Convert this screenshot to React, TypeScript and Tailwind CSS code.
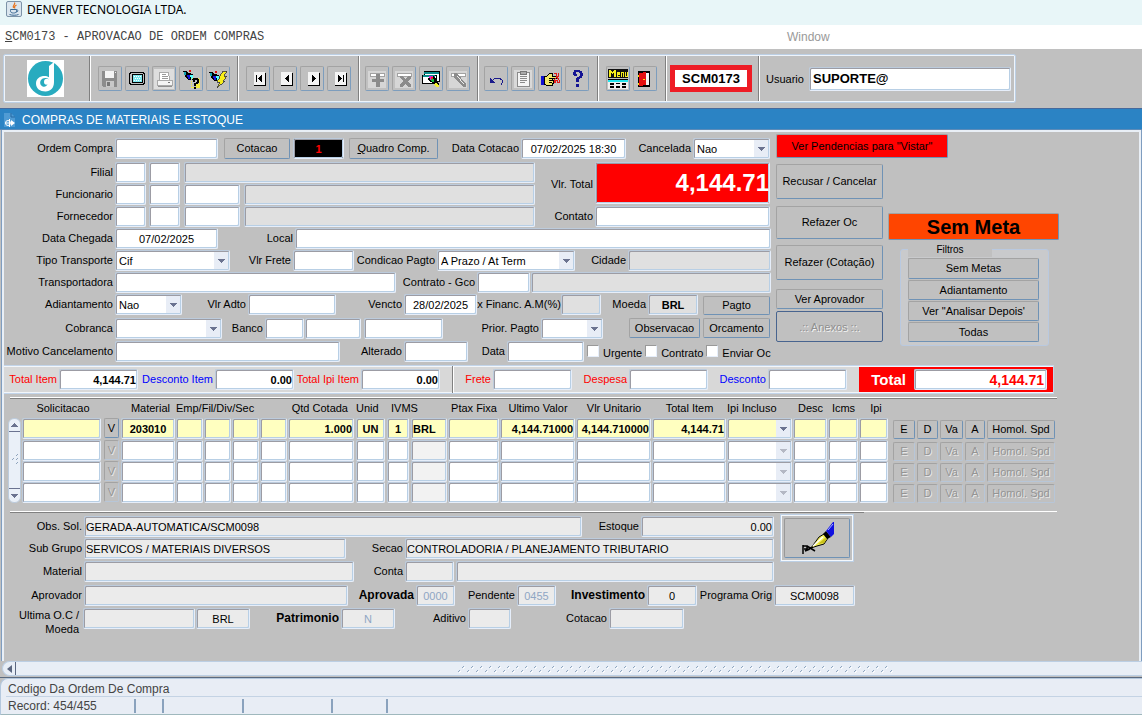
import React from "react";
import { clsx } from "clsx";

const boxEdge =
  "block rounded-[2px] border border-t-[#bccbdc] border-l-[#bccbdc] border-r-[#e6eefa] border-b-[#e6eefa] shadow-[inset_1px_1px_0_#9c9ca4,inset_-1px_-1px_0_#b8cfe5] outline-none";

const buttonEdge =
  "shrink-0 rounded-[2px] border border-t-[#a3a3a3] border-l-[#a3a3a3] border-r-[#6f92b5] border-b-[#6f92b5] whitespace-nowrap text-center leading-none";

type LabelProps = { htmlFor: string; className: string; children: React.ReactNode };

function Label({ htmlFor, className, children }: LabelProps) {
  return (
    <label htmlFor={htmlFor} className={clsx("block h-[21px] shrink-0 whitespace-nowrap pr-[2px] text-right leading-[21px]", className)}>
      {children}
    </label>
  );
}

type BoxProps = { id: string; className?: string; value?: string; name?: string };

function Box({ id, className, value, name }: BoxProps) {
  return (
    <input
      id={id}
      aria-label={name}
      defaultValue={value}
      className={clsx(boxEdge, "h-[21px] shrink-0 px-px", className)}
    />
  );
}

type DropProps = { id: string; className: string; options: string[]; name?: string; tone?: string; muted?: boolean };

function Drop({ id, className, options, name, tone = "bg-white", muted }: DropProps) {
  return (
    <div className={clsx("relative h-[21px] shrink-0", className)}>
      <select id={id} aria-label={name} disabled={muted} className={clsx(boxEdge, "h-full w-full appearance-none pl-[3px] pr-4 text-black opacity-100", tone)}>
        {options.map((o) => (
          <option key={o}>{o}</option>
        ))}
      </select>
      <span className="pointer-events-none absolute inset-y-[2px] right-[2px] flex w-[14px] items-center justify-center bg-[#e8edf6]">
        <svg width="7" height="4" viewBox="0 0 7 4" shapeRendering="crispEdges">
          <path d="M0 0h7v1h-1v1h-1v1h-1v1h-1v-1h-1v-1h-1v-1h-1z" fill={muted ? "#b4b8c4" : "#6b7390"} />
        </svg>
      </span>
    </div>
  );
}

function Push({ className, children, disabled }: { className?: string; children: React.ReactNode; disabled?: boolean }) {
  return (
    <button type="button" disabled={disabled} className={clsx(buttonEdge, className)}>
      {children}
    </button>
  );
}

function Row({ className, children }: { className?: string; children: React.ReactNode }) {
  return <div className={clsx("flex h-[22px] items-start", className)}>{children}</div>;
}

/* ---------- toolbar drawings ---------- */

const Ico = ({ children }: { children: React.ReactNode }) => (
  <svg width="20" height="20" viewBox="0 0 20 20" shapeRendering="crispEdges">
    {children}
  </svg>
);

const icons: Record<string, React.ReactNode> = {
  Salvar: (
    <Ico>
      <path d="M2 2h15v16H3l-1-1z" fill="#8c8c8c" />
      <path d="M5 2h9v7H5z" fill="#f4f4f4" />
      <path d="M6 12h8v6H6z" fill="#c8c8c8" />
      <path d="M7 13h3v4H7z" fill="#777" />
      <path d="M15 3h1v1h-1z" fill="#eee" />
    </Ico>
  ),
  Tela: (
    <Ico>
      <path d="M3 3h14v1h1v11h-1v1H3v-1H2V4h1z" fill="#000" />
      <path d="M4 4h12v1h1v9h-1v1H4v-1H3V5h1z" fill="#c0c0c0" />
      <path d="M5 5h11v9H5z" fill="#000" />
      <path d="M6 6h9v7H6z" fill="#7ee8ee" />
      <path d="M7 7h1v1H7zM9 7h1v1H9zM11 7h1v1h-1zM13 7h1v1h-1zM8 9h1v1H8zM10 9h1v1h-1zM12 9h1v1h-1zM7 11h1v1H7zM9 11h1v1H9zM11 11h1v1h-1zM13 11h1v1h-1z" fill="#fff" />
    </Ico>
  ),
  Imprimir: (
    <Ico>
      <path d="M0 0h20v20H0z" fill="#dedede" />
      <path d="M6 3h8l2 8H5z" fill="#fff" stroke="#aaa" />
      <path d="M8 5h4v1H8zM8 7h6v1H8zM8 9h6v1H8z" fill="#999" />
      <path d="M3 11h15v5H3z" fill="#f4f4f4" stroke="#aaa" />
      <path d="M4 17h14v1H4z" fill="#909090" />
      <path d="M14 13h2v1h-2z" fill="#777" />
    </Ico>
  ),
  "Entrar consulta": (
    <Ico>
      <path d="M11 9h1v1h-1zM13 9h1v1h-1zM15 9h1v1h-1zM17 9h1v1h-1zM10 12h1v1h-1zM10 14h1v1h-1zM10 16h1v1h-1zM10 18h9v1h-9zM18 10h1v8h-1zM15 15h3v3h-3z" fill="#f4ec3c" />
      <path d="M2 2h3l3 2 4 1v3l-3 3H7L4 7z" fill="#000" />
      <path d="M3 3h2v3H3z" fill="#16a7b4" />
      <path d="M6 6h3v4H7z" fill="#1515d6" />
      <path d="M9 6h3v2l-2 2z" fill="#5ff" />
      <path d="M8 1h2v2H8z" fill="#e01010" />
      <path d="M12 9h5v1h1v4h-1v1h-2v2h-2v-3h2v-1h1v-2h-2v2h-2v-2h-1v-1h1zM13 18h2v2h-2z" fill="#000" />
    </Ico>
  ),
  "Executar consulta": (
    <Ico>
      <path d="M1 3h3l3 2 4 1v3l-3 3H6L3 8z" fill="#000" />
      <path d="M2 4h2v3H2z" fill="#16a7b4" />
      <path d="M5 7h3v4H6z" fill="#1515d6" />
      <path d="M8 7h3v2l-2 2z" fill="#5ff" />
      <path d="M7 2h2v2H7z" fill="#e01010" />
      <path d="M15 2h4l-3 5h3l-4 5h2l-8 7 3-6H9l3-5h-1z" fill="#f7ee1a" stroke="#333" strokeWidth="0.8" />
    </Ico>
  ),
  Primeiro: (
    <Ico>
      <path d="M6 4h12v13H6z" fill="#000" />
      <path d="M6 3h11v13H6z" fill="#f4f4f4" />
      <path d="M8 6h1v7H8zM13 6h1v7h-1v-1h-1v-1h-1v-1h-1V9h1V8h1V7h1z" fill="#000" />
      <path d="M12 7h1v5h-1z" fill="#000" />
    </Ico>
  ),
  Anterior: (
    <Ico>
      <path d="M6 4h12v13H6z" fill="#000" />
      <path d="M6 3h11v13H6z" fill="#f4f4f4" />
      <path d="M13 6h1v7h-1v-1h-1v-1h-1v-1h-1V9h1V8h1V7h1z" fill="#000" />
    </Ico>
  ),
  Proximo: (
    <Ico>
      <path d="M6 4h12v13H6z" fill="#000" />
      <path d="M6 3h11v13H6z" fill="#f4f4f4" />
      <path d="M10 6h1v1h1v1h1v1h1v1h-1v1h-1v1h-1v1h-1z" fill="#000" />
    </Ico>
  ),
  Ultimo: (
    <Ico>
      <path d="M6 4h12v13H6z" fill="#000" />
      <path d="M6 3h11v13H6z" fill="#f4f4f4" />
      <path d="M9 6h1v1h1v1h1v1h1v1h-1v1h-1v1h-1v1H9zM14 6h1v7h-1z" fill="#000" />
    </Ico>
  ),
  Inserir: (
    <Ico>
      <path d="M1 2h18v17H1z" fill="#d6d6d6" />
      <path d="M3 4h14v3H3z" fill="#fff" stroke="#a2a2a2" />
      <path d="M9 5h4v5h4v3h-4v5H9v-5H5v-3h4z" fill="#8b8b8b" />
    </Ico>
  ),
  Excluir: (
    <Ico>
      <path d="M1 2h18v17H1z" fill="#d6d6d6" />
      <path d="M3 4h14v3H3z" fill="#fff" stroke="#a2a2a2" />
      <path d="M6 7h3l2 3 3-3h3v2l-3 3 3 4v2h-3l-3-3-3 3H6v-2l3-4-3-3z" fill="#8b8b8b" />
    </Ico>
  ),
  Pesquisar: (
    <Ico>
      <path d="M3 2h15v10H3z" fill="#fff" stroke="#000" />
      <path d="M3 3h15v2H3z" fill="#0b8a8a" />
      <path d="M1 6h14v8H1z" fill="#fff" stroke="#000" />
      <path d="M2 6h12v2H2z" fill="#0b8a8a" />
      <path d="M8 7h4l3 3 3 5v2l-3 1-5-5-3-2z" fill="#000" />
      <path d="M8 7h4v4H9z" fill="#e81ccf" />
      <path d="M10 10h3v3h-2z" fill="#10c040" />
      <path d="M15 13l3 4-1 1h-2l-2-2z" fill="#f2ec30" />
      <path d="M10 8h2v2h-2z" fill="#f02020" />
    </Ico>
  ),
  Limpar: (
    <Ico>
      <path d="M1 2h18v17H1z" fill="#d6d6d6" />
      <path d="M3 4h14v3H3z" fill="#fff" stroke="#a2a2a2" />
      <path d="M6 4h3l9 11v3h-3L6 8z" fill="#8b8b8b" />
      <path d="M9 7h1l6 8h-1z" fill="#eee" />
    </Ico>
  ),
  Desfazer: (
    <Ico>
      <path d="M5 13l4-4h4l3 2v3l-1 2" fill="none" stroke="#1a1a8c" strokeWidth="1" />
      <path d="M4 9h1v1h1v1h1v1h1v1h1v1H4z" fill="#1a1a8c" />
    </Ico>
  ),
  Colar: (
    <Ico>
      <path d="M1 1h18v18H1z" fill="#d9d9d9" />
      <path d="M4 3h12v14H4z" fill="#f5f5f5" stroke="#8b8b8b" />
      <path d="M7 2h6v3H7z" fill="#aaa" stroke="#777" />
      <path d="M7 7h7v1H7zM7 9h7v1H7zM7 11h7v1H7zM7 13h5v1H7z" fill="#8b8b8b" />
    </Ico>
  ),
  Atalhos: (
    <Ico>
      <path d="M1 7h3v9H1z" fill="#1010d0" />
      <path d="M4 7h3l3-3h2v3h4v2h-4v2h2v1h-1v2h-1v2H6l-2-1z" fill="#f2e66a" stroke="#000" strokeWidth="1" />
      <path d="M9 9h5M9 11h4M9 13h3" stroke="#000" />
      <path d="M14 4h2v3h2V4h1M14 11l3-3 2 3v2h-2v-2h-2v2h-1z" fill="none" stroke="#e01818" />
    </Ico>
  ),
  Ajuda: (
    <Ico>
      <path d="M7 1h6v1h2v2h1v3h-1v2h-2v1h-1v3H9V9h1V8h2V7h1V4h-1V3H9v2h1v2H7V6H6V3h1zM9 15h3v3H9z" fill="#141494" />
    </Ico>
  ),
  Menu: (
    <Ico>
      <path d="M0 0h20v9H0z" fill="#111" />
      <path d="M1 1h2v1h1v1h1V2h1V1h2v7H6V4H5v1H4V4H3v4H1zM9 3h3v3h-2v1h2v1H9zM13 3h3v5h-1V4h-1v4h-1zM17 3h1v4h1V3h1v5h-3z" fill="#f7ee1a" />
      <path d="M0 10h20v1H0z" fill="#000" />
      <path d="M0 11h20v2H0z" fill="#22e6ee" />
      <path d="M0 13h20v7H0z" fill="#f0f0f0" />
      <path d="M2 14h4v2H2zM8 14h4v1H8zM14 14h4v2h-4zM2 17h4v2H2zM8 17h4v2H8zM14 17h4v2h-4z" fill="#000" />
    </Ico>
  ),
  Sair: (
    <Ico>
      <path d="M3 2h12v16H3z" fill="#000" />
      <path d="M11 4h3v12h-3z" fill="#f4f4f4" />
      <path d="M4 4l7-1v13l-7 1z" fill="#e41010" />
      <path d="M3 6h1v2H3zM3 14h1v2H3z" fill="#ffe000" />
      <path d="M8 10h2v1H8z" fill="#ffe000" />
    </Ico>
  ),
};

function ToolGroup({ names, className }: { names: string[]; className: string }) {
  return (
    <div className={clsx(toolSection, "gap-[3px]", className)}>
      {names.map((n) => (
        <button
          key={n}
          type="button"
          aria-label={n}
          className="flex h-[25px] w-6 shrink-0 items-center justify-center rounded-[2px] border border-t-[#a3a3a3] border-l-[#a3a3a3] border-r-[#7d9dbd] border-b-[#7d9dbd]"
        >
          {icons[n]}
        </button>
      ))}
    </div>
  );
}

const toolSection = "flex shrink-0 items-center border-r border-[#808080] shadow-[1px_0_0_#fff]";

function Toolbar() {
  return (
    <div className="flex h-[59px] items-center pl-[3px]">
      <div className="flex h-[49px] rounded-[2px] border border-[#bccfe4] p-px shadow-[inset_0_0_0_1px_#eef4fb]">
        <div className={clsx(toolSection, "w-[85px] pl-[22px]")}>
          <svg width="37" height="37" viewBox="0 0 37 37">
            <path d="M0 0h37v37H0z" fill="#fff" />
            <circle cx="18.5" cy="18.5" r="17.5" fill="#28abbf" />
            <path d="M27 2v20c0 6-3.500 9.500-8.500 9.500-5.500 0-9.500-3-9.500-8s4-7.500 8.500-7.500c2 0 3 .3 4.500 1.200V6z" fill="#fff" />
            <path d="M22 19.500c-2.500-1.500-5-.5-5 2.500 0 2.500 2.200 3.200 3.500 2.300-.8 2-2.800 3-4.800 2.200-2.500-1-3.200-4-1.800-6.200 1.600-2.500 5.600-3 8.100-.8z" fill="#28abbf" />
          </svg>
        </div>
        <ToolGroup className="w-[148px] pl-2" names={["Salvar", "Tela", "Imprimir", "Entrar consulta", "Executar consulta"]} />
        <ToolGroup className="w-[121px] pl-2" names={["Primeiro", "Anterior", "Proximo", "Ultimo"]} />
        <ToolGroup className="w-[119px] pl-[6px]" names={["Inserir", "Excluir", "Pesquisar", "Limpar"]} />
        <ToolGroup className="w-[120px] pl-[6px]" names={["Desfazer", "Colar", "Atalhos", "Ajuda"]} />
        <ToolGroup className="w-[68px] pl-2" names={["Menu", "Sair"]} />
        <div className={clsx(toolSection, "w-[93px] pl-1")}>
          <input
            aria-label="Programa"
            defaultValue="SCM0173"
            className="h-[27px] w-[82px] border-[5px] border-[#ee1c25] bg-white text-center text-[13px] font-bold outline-none"
          />
        </div>
        <div className="flex items-center pl-[7px] pr-[3px]">
          <label htmlFor="usuario" className="w-[43px]">Usuario</label>
          <input id="usuario" defaultValue="SUPORTE@" className={clsx(boxEdge, "h-6 w-[202px] bg-white px-[3px] text-[13px] font-bold")} />
        </div>
      </div>
    </div>
  );
}

/* ---------- order form ---------- */

const white = "bg-white";
const grey = "bg-[#e0e0e0]";
const pale = "bg-[#ebebeb]";

function OrderForm() {
  return (
    <div className="w-[767px] shrink-0 pt-[6px]">
      <Row className="mb-[2px]">
        <Label htmlFor="ordem" className="w-[111px]">Ordem Compra</Label>
        <Box id="ordem" className={clsx(white, "w-[103px]")} />
        <Push className="ml-[6px] h-[21px] w-[66px]">Cotacao</Push>
        <Box id="numCotacao" name="Numero da cotacao" value="1" className="ml-[3px] w-[51px] bg-black text-center font-bold text-[#ff0000]" />
        <Push className="ml-[5px] h-[21px] w-[89px]"><u>Q</u>uadro Comp.</Push>
        <Label htmlFor="dataCotacao" className="w-[83px]">Data Cotacao</Label>
        <Box id="dataCotacao" value="07/02/2025 18:30" className={clsx(white, "w-[105px] text-center")} />
        <Label htmlFor="cancelada" className="w-[67px]">Cancelada</Label>
        <Drop id="cancelada" className="w-[77px]" options={["Nao", "Sim"]} />
      </Row>

      <div className="flex">
        <div className="w-[531px] shrink-0">
          <Row>
            <Label htmlFor="filial" className="w-[111px]">Filial</Label>
            <Box id="filial" className={clsx(white, "w-[31px]")} />
            <Box id="filial2" name="Filial codigo" className={clsx(white, "ml-[3px] w-[31px]")} />
            <Box id="filial3" name="Filial nome" className={clsx(grey, "ml-1 w-[351px]")} />
          </Row>
          <Row>
            <Label htmlFor="func" className="w-[111px]">Funcionario</Label>
            <Box id="func" className={clsx(white, "w-[31px]")} />
            <Box id="func2" name="Funcionario filial" className={clsx(white, "ml-[3px] w-[31px]")} />
            <Box id="func3" name="Funcionario codigo" className={clsx(white, "ml-1 w-[56px]")} />
            <Box id="func4" name="Funcionario nome" className={clsx(grey, "ml-1 w-[291px]")} />
          </Row>
          <Row>
            <Label htmlFor="forn" className="w-[111px]">Fornecedor</Label>
            <Box id="forn" className={clsx(white, "w-[31px]")} />
            <Box id="forn2" name="Fornecedor filial" className={clsx(white, "ml-[3px] w-[31px]")} />
            <Box id="forn3" name="Fornecedor codigo" className={clsx(white, "ml-1 w-[56px]")} />
            <Box id="forn4" name="Fornecedor nome" className={clsx(grey, "ml-1 w-[291px]")} />
          </Row>
        </div>
        <div className="flex-1">
          <div className="flex h-11 items-center">
            <Label htmlFor="vlrTotal" className="w-[60px]">Vlr. Total</Label>
            <input
              id="vlrTotal"
              defaultValue="4,144.71"
              className={clsx(boxEdge, "mb-[2px] h-[42px] w-[175px] bg-[#ff0000] px-0 text-right text-2xl font-bold text-white")}
            />
          </div>
          <Row>
            <Label htmlFor="contato" className="w-[60px]">Contato</Label>
            <Box id="contato" className={clsx(white, "w-[175px]")} />
          </Row>
        </div>
      </div>

      <Row>
        <Label htmlFor="chegada" className="w-[111px]">Data Chegada</Label>
        <Box id="chegada" value="07/02/2025" className={clsx(white, "w-[103px] text-center")} />
        <Label htmlFor="local" className="w-[77px]">Local</Label>
        <Box id="local" className={clsx(white, "w-[476px]")} />
      </Row>
      <Row>
        <Label htmlFor="transporte" className="w-[111px]">Tipo Transporte</Label>
        <Drop id="transporte" className="w-[115px]" options={["Cif", "Fob"]} />
        <Label htmlFor="frete" className="w-[63px]">Vlr Frete</Label>
        <Box id="frete" className={clsx(white, "w-[61px]")} />
        <Label htmlFor="condicao" className="w-[83px]">Condicao Pagto</Label>
        <Drop id="condicao" className="w-[138px]" options={["A Prazo / At Term", "A Vista"]} />
        <Label htmlFor="cidade" className="w-[53px]">Cidade</Label>
        <Box id="cidade" className={clsx(grey, "w-[143px]")} />
      </Row>
      <Row>
        <Label htmlFor="transportadora" className="w-[111px]">Transportadora</Label>
        <Box id="transportadora" className={clsx(white, "w-[281px]")} />
        <Label htmlFor="gco" className="w-[81px]">Contrato - Gco</Label>
        <Box id="gco" className={clsx(white, "w-[53px]")} />
        <Box id="gcoNome" name="Descricao do contrato" className={clsx(grey, "ml-px w-[240px]")} />
      </Row>
      <Row>
        <Label htmlFor="adiantamento" className="w-[111px]">Adiantamento</Label>
        <Drop id="adiantamento" className="w-[67px]" options={["Nao", "Sim"]} />
        <Label htmlFor="adto" className="w-[66px]">Vlr Adto</Label>
        <Box id="adto" className={clsx(white, "w-[88px]")} />
        <Label htmlFor="vencto" className="w-[68px]">Vencto</Label>
        <Box id="vencto" value="28/02/2025" className={clsx(white, "w-[73px] text-center")} />
        <label htmlFor="financ" className="block h-[21px] w-[84px] shrink-0 whitespace-nowrap text-center leading-[21px]">x Financ. A.M(%)</label>
        <Box id="financ" className={clsx(grey, "w-[40px]")} />
        <Label htmlFor="moeda" className="w-[47px]">Moeda</Label>
        <Box id="moeda" value="BRL" className={clsx(grey, "w-[50px] text-center font-bold")} />
        <Push className="ml-[5px] mt-[2px] h-[19px] w-[67px]">Pagto</Push>
      </Row>
      <Row className="mt-[2px]">
        <Label htmlFor="cobranca" className="w-[111px]">Cobranca</Label>
        <Drop id="cobranca" className="w-[107px]" options={[""]} />
        <Label htmlFor="banco" className="w-[43px]">Banco</Label>
        <Box id="banco" className={clsx(white, "w-[39px]")} />
        <Box id="agencia" name="Agencia" className={clsx(white, "ml-px w-[56px]")} />
        <Box id="conta" name="Conta corrente" className={clsx(white, "ml-[3px] w-[79px]")} />
        <Label htmlFor="prior" className="w-[98px]">Prior. Pagto</Label>
        <Drop id="prior" className="w-[62px]" options={[""]} />
        <Push className="ml-[26px] h-[20px] w-[71px]">Observacao</Push>
        <Push className="ml-[3px] h-[20px] w-[67px]">Orcamento</Push>
      </Row>
      <Row className="mt-px">
        <Label htmlFor="motivo" className="w-[111px]">Motivo Cancelamento</Label>
        <Box id="motivo" className={clsx(white, "w-[225px]")} />
        <Label htmlFor="alterado" className="w-[64px]">Alterado</Label>
        <Box id="alterado" className={clsx(white, "w-[64px]")} />
        <Label htmlFor="data" className="w-[39px]">Data</Label>
        <Box id="data" className={clsx(white, "w-[77px]")} />
        {["Urgente", "Contrato", "Enviar Oc"].map((t) => (
          <label key={t} className="ml-[3px] flex h-[21px] items-start gap-1 whitespace-nowrap">
            <input type="checkbox" className="mt-1 size-3 appearance-none border border-t-[#999] border-l-[#999] border-r-[#e6eefa] border-b-[#e6eefa] bg-white" />
            <span className="pt-[2px] leading-[20px]">{t}</span>
          </label>
        ))}
      </Row>
    </div>
  );
}

function Actions() {
  return (
    <div className="ml-[5px] flex flex-col items-start pt-[2px]">
      <Push className="h-6 w-[172px] bg-[#ff0000]">Ver Pendencias para "Vistar"</Push>
      <div className="mt-[6px] flex items-start">
        <div className="flex w-[107px] flex-col">
          <Push className="h-[35px]">Recusar / Cancelar</Push>
          <Push className="mt-[7px] h-[33px]">Refazer Oc</Push>
          <Push className="mt-[6px] h-[35px]">Refazer (Cotação)</Push>
          <Push className="mt-[9px] h-[20px]">Ver Aprovador</Push>
          <button
            type="button"
            disabled
            className="mt-[2px] h-[31px] rounded-[2px] border border-[#48648f] text-[#8f8f8f] [text-shadow:1px_1px_0_#f4f4f4]"
          >
            .:: Anexos ::.
          </button>
        </div>
        <div className="ml-[5px] pt-[49px]">
          <Push className="block h-[27px] w-[171px] bg-[#ff4500] text-xl font-bold">Sem Meta</Push>
          <div role="group" aria-labelledby="filtros" className="ml-3 mt-[9px] w-[149px] rounded-[3px] border border-[#b9c9e0] bg-[#c9cacc] pr-[9px] pl-[7px] pb-[3px]">
            <div className="-mt-px h-[8px] w-[84px] bg-[#c0c0c0] text-center">
              <span id="filtros" className="block text-[10px] leading-[2px]">Filtros</span>
            </div>
            <div className="mt-px flex flex-col gap-px bg-[#c0c0c0]">
              <Push className="h-[21px]">Sem Metas</Push>
              <Push className="h-[20px]">Adiantamento</Push>
              <Push className="h-[20px]">Ver "Analisar Depois'</Push>
              <Push className="h-[20px]">Todas</Push>
            </div>
          </div>
        </div>
      </div>
    </div>
  );
}

function Totals() {
  const red = "text-[#ff0000]";
  const blue = "text-[#0000ff]";
  const cell = "h-[20px] w-[79px] bg-white text-right font-bold";
  return (
    <div className="mt-[2px] flex h-[29px] w-[1050px] items-center border-y border-r border-[#c3d5ea] bg-[#d8d8d8] shadow-[inset_0_1px_0_#f2f6fb,inset_0_-1px_0_#f2f6fb]">
      <div className="flex h-full w-[449px] items-center border-r border-[#808080] shadow-[1px_0_0_#fff]">
        <Label htmlFor="tItem" className={clsx("w-[55px] pr-1", red)}>Total Item</Label>
        <Box id="tItem" value="4,144.71" className={cell} />
        <Label htmlFor="tDesc" className={clsx("w-[77px] pr-1", blue)}>Desconto Item</Label>
        <Box id="tDesc" value="0.00" className={cell} />
        <Label htmlFor="tIpi" className={clsx("w-[67px] pr-1", red)}>Total Ipi Item</Label>
        <Box id="tIpi" value="0.00" className={cell} />
      </div>
      <Label htmlFor="tFrete" className={clsx("w-[40px] pr-1", red)}>Frete</Label>
      <Box id="tFrete" className={cell} />
      <Label htmlFor="tDespesa" className={clsx("w-[57px] pr-1", red)}>Despesa</Label>
      <Box id="tDespesa" className={cell} />
      <Label htmlFor="tDesconto" className={clsx("w-[60px] pr-1", blue)}>Desconto</Label>
      <Box id="tDesconto" className={cell} />
      <div className="ml-3 flex h-[25px] flex-1 items-center bg-[#ff0000]">
        <label htmlFor="total" className="w-[55px] pr-2 text-right text-[15px] font-bold text-white">Total</label>
        <input id="total" defaultValue="4,144.71" className={clsx(boxEdge, "h-[21px] w-[133px] bg-white px-[2px] text-right text-sm font-bold text-[#ff0000]")} />
      </div>
    </div>
  );
}

/* ---------- item table ---------- */

type Col = { key: string; col: string; pad: string; value?: string; align?: string; idle?: string };

const columns: Col[] = [
  { key: "Solicitacao", col: "w-[82px]", pad: "pr-[3px]" },
  { key: "V", col: "w-[17px]", pad: "pr-[2px]" },
  { key: "Material", col: "w-[55px]", pad: "pr-px", value: "203010", align: "text-center" },
  { key: "Emp", col: "w-[28px]", pad: "pr-px" },
  { key: "Fil", col: "w-[28px]", pad: "pr-px" },
  { key: "Div", col: "w-[28px]", pad: "pr-px" },
  { key: "Sec", col: "w-[28px]", pad: "pr-px" },
  { key: "Qtd Cotada", col: "w-[68px]", pad: "pr-[2px]", value: "1.000", align: "text-right" },
  { key: "Unid", col: "w-[31px]", pad: "pr-[2px]", value: "UN", align: "text-center" },
  { key: "IVMS", col: "w-[24px]", pad: "pr-[2px]", value: "1", align: "text-center" },
  { key: "Moeda", col: "w-[37px]", pad: "pr-px", value: "BRL", idle: "bg-[#f2f2f2]" },
  { key: "Ptax Fixa", col: "w-[52px]", pad: "pr-px" },
  { key: "Ultimo Valor", col: "w-[76px]", pad: "pr-px", value: "4,144.71000", align: "text-right" },
  { key: "Vlr Unitario", col: "w-[76px]", pad: "pr-px", value: "4,144.710000", align: "text-right" },
  { key: "Total Item", col: "w-[75px]", pad: "pr-px", value: "4,144.71", align: "text-right" },
  { key: "Ipi Incluso", col: "w-[66px]", pad: "pr-px" },
  { key: "Desc", col: "w-[35px]", pad: "pr-px" },
  { key: "Icms", col: "w-[31px]", pad: "pr-px" },
  { key: "Ipi", col: "w-[34px]", pad: "pr-[5px]" },
  { key: "E", col: "w-[24px]", pad: "pr-[2px]" },
  { key: "D", col: "w-[23px]", pad: "pr-[2px]" },
  { key: "Va", col: "w-[25px]", pad: "pr-[2px]" },
  { key: "A", col: "w-[22px]", pad: "pr-[2px]" },
  { key: "Homol. Spd", col: "w-[69px]", pad: "pr-px" },
];

const rowActions = ["E", "D", "Va", "A", "Homol. Spd"];

function ItemCell({ c, row }: { c: Col; row: number }) {
  const active = row === 0;
  const off = "text-[#949494] border-r-[#b7c6d8] border-b-[#b7c6d8] [text-shadow:1px_1px_0_#e8e8e8]";
  if (c.key === "V") return <Push disabled={!active} className={clsx("block h-[20px] w-full", !active && off)}>V</Push>;
  if (rowActions.includes(c.key))
    return <Push disabled={!active} className={clsx("mt-[2px] block h-[19px] w-full", !active && off)}>{c.key}</Push>;
  const tone = active ? "bg-[#ffffc0]" : c.idle ?? "bg-white";
  if (c.key === "Ipi Incluso")
    return <Drop id={`ipi${row}`} name="Ipi Incluso" className="w-full" options={[""]} tone={tone} muted={!active} />;
  return (
    <input
      aria-label={`${c.key} ${row + 1}`}
      defaultValue={active ? c.value : ""}
      className={clsx(boxEdge, "h-[21px] w-full px-px font-bold", tone, c.align)}
    />
  );
}

function Items() {
  return (
    <div className="mt-[3px] ml-[6px] w-[1047px] border-t border-white">
      <div className="flex border-t border-[#808080]">
        <div className="-ml-[2px] mt-[19px] mr-px flex h-[85px] w-[13px] shrink-0 flex-col rounded-md border border-[#bccbdc] bg-[#eaf0f8]">
          <button type="button" aria-label="Acima" className="flex h-[13px] items-center justify-center border-b border-[#6b7390]">
            <svg width="7" height="4" viewBox="0 0 7 4" shapeRendering="crispEdges"><path d="M0 4h7v-1h-1v-1h-1v-1h-1v-1h-1v1h-1v1h-1v1h-1z" fill="#6b7390" /></svg>
          </button>
          <div className="flex flex-1 items-center justify-center">
            <svg width="8" height="12" viewBox="0 0 8 12"><path d="M1 6l2-2M5 2l2-2M5 6l2-2M5 10l2-2" stroke="#8fa4bd" /></svg>
          </div>
          <button type="button" aria-label="Abaixo" className="flex h-[14px] items-center justify-center border-t border-[#6b7390]">
            <svg width="7" height="4" viewBox="0 0 7 4" shapeRendering="crispEdges"><path d="M0 0h7v1h-1v1h-1v1h-1v1h-1v-1h-1v-1h-1v-1h-1z" fill="#6b7390" /></svg>
          </button>
        </div>
        <table className="w-[1034px] shrink-0 table-fixed border-collapse">
          <colgroup>
            {columns.map((c) => (
              <col key={c.key} className={c.col} />
            ))}
          </colgroup>
          <thead>
            <tr className="h-[19px] whitespace-nowrap [&>th]:p-0 [&>th]:align-top [&>th]:font-normal [&>th]:leading-[18px]">
              <th>Solicitacao</th>
              <th />
              <th className="text-right"><span className="pr-[6px]">Material</span></th>
              <th colSpan={4} className="text-left">Emp/Fil/Div/Sec</th>
              <th className="text-right"><span className="pr-2">Qtd Cotada</span></th>
              <th className="text-left">Unid</th>
              <th colSpan={2} className="text-left"><span className="pl-1">IVMS</span></th>
              <th>Ptax Fixa</th>
              <th>Ultimo Valor</th>
              <th>Vlr Unitario</th>
              <th>Total Item</th>
              <th className="text-left">Ipi Incluso</th>
              <th>Desc</th>
              <th>Icms</th>
              <th>Ipi</th>
              <th colSpan={5} />
            </tr>
          </thead>
          <tbody>
            {[0, 1, 2, 3].map((r) => (
              <tr key={r} className={r === 0 ? "h-[22px]" : "h-[21px]"}>
                {columns.map((c) => (
                  <td key={c.key} className={clsx("p-0 align-top", c.pad)}>
                    <ItemCell c={c} row={r} />
                  </td>
                ))}
              </tr>
            ))}
          </tbody>
        </table>
      </div>
    </div>
  );
}

function Details() {
  return (
    <div className="mt-2 ml-[6px] w-[1047px] border-t border-white">
      <div className="-ml-[6px] flex">
        <div className="w-[770px] shrink-0">
          <div className="mb-[3px] ml-[6px] h-px bg-[#808080]" />
          <Row>
            <Label htmlFor="obs" className="w-[80px]">Obs. Sol.</Label>
            <Box id="obs" value="GERADA-AUTOMATICA/SCM0098" className={clsx(pale, "w-[498px]")} />
            <Label htmlFor="estoque" className="w-[59px]">Estoque</Label>
            <Box id="estoque" value="0.00" className={clsx(pale, "w-[133px] text-right")} />
          </Row>
          <Row>
            <Label htmlFor="sub" className="w-[80px]">Sub Grupo</Label>
            <Box id="sub" value="SERVICOS / MATERIAIS DIVERSOS" className={clsx(pale, "w-[262px]")} />
            <Label htmlFor="secao" className="w-[59px]">Secao</Label>
            <Box id="secao" value="CONTROLADORIA / PLANEJAMENTO TRIBUTARIO" className={clsx(pale, "w-[369px]")} />
          </Row>
          <Row className="mt-px">
            <Label htmlFor="material" className="w-[80px]">Material</Label>
            <Box id="material" className={clsx(pale, "w-[270px]")} />
            <Label htmlFor="contaC" className="w-[51px]">Conta</Label>
            <Box id="contaC" className={clsx(pale, "w-[49px]")} />
            <Box id="contaD" name="Descricao da conta" className={clsx(pale, "ml-[2px] w-[318px]")} />
          </Row>
        </div>
        <div className="w-[90px] shrink-0">
          <div className="h-px bg-[#808080]" />
          <div className="mt-px ml-[6px] h-[48px] w-[74px] border border-[#bccfe4] p-[3px] shadow-[inset_0_0_0_1px_#f4f8fc]">
            <button type="button" aria-label="Assinar" className="flex h-full w-full items-center justify-center rounded-[2px] border border-t-[#999] border-l-[#999] border-r-[#6f92b5] border-b-[#6f92b5]">
              <svg width="33" height="33" viewBox="0 0 33 33">
                <path d="M2 23v9M2 24h4v3H3M4 29l8-4M6 24l8 5M9 27l-5 2" fill="none" stroke="#000" strokeWidth="1.500" />
                <path d="M10 26l8-11 5-3 4 4-4 6-7 2z" fill="#f4f05a" stroke="#000" />
                <path d="M12 24l10-9" stroke="#fff" strokeWidth="1.500" />
                <path d="M17 22l7-6 2 1-3 4z" fill="#c9c01a" />
                <path d="M22 12l3-3 5 6-4 2z" fill="#000" />
                <path d="M25 9l7-9h1v12l-3 3z" fill="#1010e0" />
                <path d="M27 8l5-6" stroke="#aab8ff" />
              </svg>
            </button>
          </div>
        </div>
      </div>
      <Row className="-ml-[6px] mt-[2px]">
        <Label htmlFor="aprovador" className="w-[80px]">Aprovador</Label>
        <Box id="aprovador" className={clsx(pale, "w-[264px]")} />
        <Label htmlFor="aprovada" className="w-[68px] text-xs font-bold">Aprovada</Label>
        <Box id="aprovada" value="0000" className={clsx(pale, "w-[39px] text-center text-[#8fa6c4]")} />
        <Label htmlFor="pendente" className="w-[62px]">Pendente</Label>
        <Box id="pendente" value="0455" className={clsx(pale, "w-[39px] text-center text-[#8fa6c4]")} />
        <Label htmlFor="invest" className="w-[91px] text-xs font-bold">Investimento</Label>
        <Box id="invest" value="0" className={clsx(pale, "w-[50px] text-center")} />
        <Label htmlFor="prog" className="w-[77px]">Programa Orig</Label>
        <Box id="prog" value="SCM0098" className={clsx(pale, "w-[81px] text-center")} />
      </Row>
      <Row className="-ml-[6px] mt-px">
        <label htmlFor="ultima" className="w-[79px] shrink-0 pr-1 text-right leading-[14px]">
          Ultima O.C / Moeda
        </label>
        <Box id="ultima" className={clsx(pale, "w-[112px]")} />
        <Box id="ultMoeda" name="Moeda" value="BRL" className={clsx(pale, "ml-px w-[54px] text-center")} />
        <Label htmlFor="patrimonio" className="w-[91px] text-xs font-bold">Patrimonio</Label>
        <Box id="patrimonio" value="N" className={clsx(pale, "w-[54px] text-center text-[#8fa6c4]")} />
        <Label htmlFor="aditivo" className="w-[73px]">Aditivo</Label>
        <Box id="aditivo" className={clsx(pale, "w-[43px]")} />
        <Label htmlFor="cot2" className="w-[98px]">Cotacao</Label>
        <Box id="cot2" className={clsx(pale, "w-[75px]")} />
      </Row>
    </div>
  );
}

function StatusBar() {
  return (
    <footer className="rounded-tl-lg border-t border-l border-[#b4c8de] border-b border-b-[#9fb8bd] bg-[#e8edf5] pl-[5px] text-xs text-[#444]">
      <p className="h-[18px] border-b border-[#c4d3e4] pl-[2px] leading-[20px]">Codigo Da Ordem De Compra</p>
      <div className="flex h-[17px] items-center pl-[2px]">
        <span className="w-[126px]">Record: 454/455</span>
        <span className="h-[14px] w-[28px] border-l-2 border-[#8aa2bd]" />
        <span className="h-[14px] w-[80px] border-l-2 border-[#8aa2bd]" />
        <span className="h-[14px] w-[89px] border-l-2 border-[#8aa2bd]" />
        <span className="h-[14px] w-[55px] border-l-2 border-[#8aa2bd]" />
        <span className="h-[14px] border-l-2 border-[#8aa2bd]" />
      </div>
    </footer>
  );
}

export default function App() {
  return (
    <div className="flex min-h-screen flex-col overflow-x-hidden bg-[#c0c0c0] font-['Liberation_Sans',Arial,sans-serif] text-[11px] leading-[14px] text-black">
      <header className="flex h-[25px] items-start bg-[#e8f6f8] pl-[6px] pt-px">
        <svg width="16" height="16" viewBox="0 0 16 16">
          <rect x="0.500" y="0.500" width="15" height="15" rx="1.500" fill="#dbe6ef" stroke="#7d93a8" />
          <path d="M8.500 1.500c1.500 2-2.500 3-1 5.500M10.500 4c-2 1-2.500 1.800-1.500 3.500" fill="none" stroke="#e8721c" strokeWidth="1.200" />
          <path d="M4.500 8.500h6v1c0 2-1 2.500-3 2.500s-3-.5-3-2.500zM10.500 9c2-.5 2 2-.5 2M3.500 13.500c2.500 1 7 1 9 0" fill="none" stroke="#3b6a93" />
        </svg>
        <h1 className="pl-[5px] font-['Noto_Sans','Open_Sans',sans-serif] text-xs leading-[17px]">DENVER TECNOLOGIA LTDA.</h1>
      </header>

      <nav className="flex h-6 items-center bg-white pl-[5px]">
        <button type="button" className="w-[782px] text-left font-['Liberation_Mono',monospace] text-xs text-[#444]">
          <u>S</u>CM0173 - APROVACAO DE ORDEM COMPRAS
        </button>
        <button type="button" className="text-xs text-[#999]">Window</button>
      </nav>

      <Toolbar />

      <div className="flex h-[22px] items-center border-t border-b border-t-[#46699c] border-b-[#5d8bb8] bg-[#2b83c4] pl-1 pt-px">
        <svg width="12" height="14" viewBox="0 0 12 14">
          <path d="M0 0h7l4 4v10H0z" fill="#4f9bd4" />
          <path d="M7 0v4h4" fill="none" stroke="#2468a3" />
          <path d="M5 6h1v8H5zM1 9.500h4v1H1zM7 7l4 3-4 3z" fill="#fff" />
          <circle cx="4" cy="10" r="2.500" fill="none" stroke="#fff" />
        </svg>
        <h2 className="pl-[6px] text-xs text-white">COMPRAS DE MATERIAIS E ESTOQUE</h2>
      </div>

      <main className="ml-px flex flex-1 flex-col border-x border-[#7f9dc0]">
        <div className="flex-1 border-2 border-b-0 border-[#e9eff6]">
          <div className="flex items-start">
            <OrderForm />
            <Actions />
          </div>
          <Totals />
          <Items />
          <Details />
        </div>
      </main>

      <div className="ml-[2px] flex h-[15px] shrink-0 items-center rounded-l-lg border-y border-l border-[#bccfe4] bg-[#e8eef6]">
        <button type="button" aria-label="Rolar para a esquerda" className="flex h-full w-[13px] items-center justify-center border-r border-[#5b6780]">
          <svg width="5" height="8" viewBox="0 0 5 8"><path d="M5 0v8L0 4z" fill="#5b6780" /></svg>
        </button>
        <svg className="ml-[442px]" width="435" height="8">
          <defs>
            <pattern id="grip" width="9" height="8" patternUnits="userSpaceOnUse">
              <path d="M4 3l2-2M0 7l2-2" stroke="#8fa6bf" />
              <path d="M5 4l2-2M1 8l2-2" stroke="#fff" />
            </pattern>
          </defs>
          <rect width="435" height="8" fill="url(#grip)" />
        </svg>
      </div>
      <div className="h-[2px] shrink-0 border-b border-[#5a6a80] bg-[#c0c0c0]" />
      <StatusBar />
    </div>
  );
}
